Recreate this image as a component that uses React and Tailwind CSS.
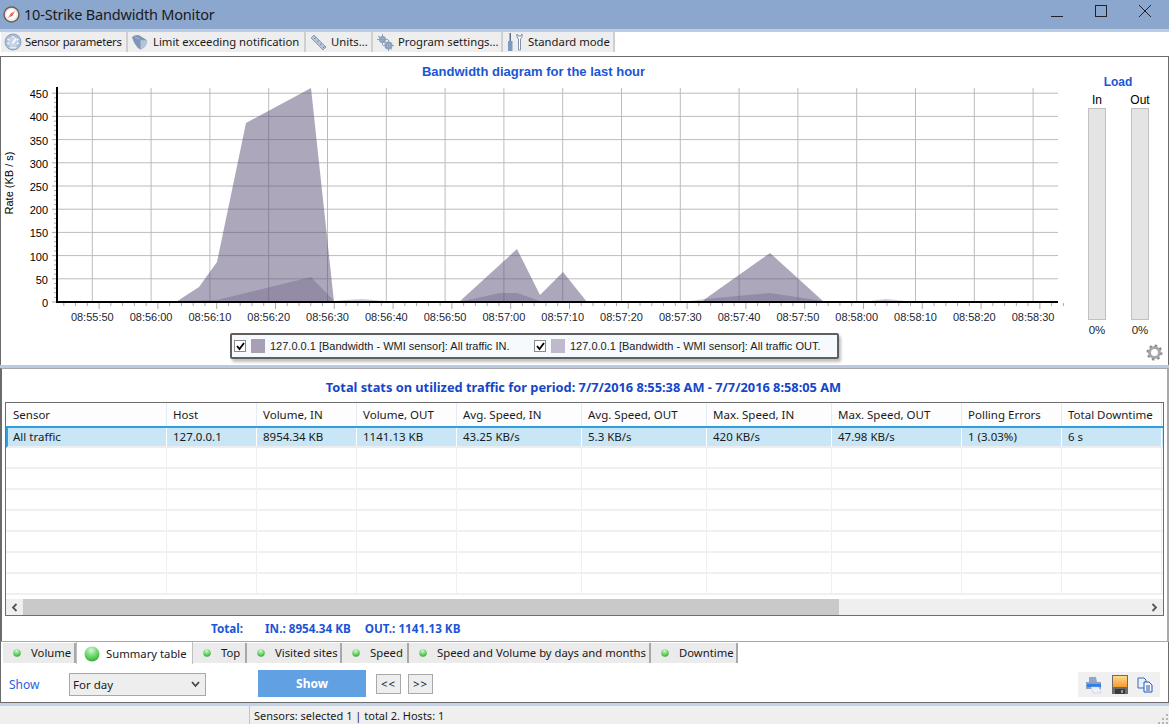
const sans = "font-['Noto_Sans','Open_Sans',sans-serif]";
const arial = "'Liberation Sans', Arial, sans-serif";

const TOOLS = [
  { label: "Sensor parameters", w: "w-[127px]", icon: <GaugeIcon />, text: "tracking-[-0.25px] -ml-[1px]" },
  { label: "Limit exceeding notification", w: "w-[178px]", icon: <BellIcon /> },
  { label: "Units...", w: "w-[67px]", icon: <RulerIcon /> },
  { label: "Program settings...", w: "w-[130px]", icon: <GearsIcon /> },
  { label: "Standard mode", w: "w-[112px]", icon: <ToolsIcon /> },
];

const COLS = [
  { name: "Sensor", value: "All traffic", w: "w-[161px]" },
  { name: "Host", value: "127.0.0.1", w: "w-[90px]" },
  { name: "Volume, IN", value: "8954.34 KB", w: "w-[100px]" },
  { name: "Volume, OUT", value: "1141.13 KB", w: "w-[100px]" },
  { name: "Avg. Speed, IN", value: "43.25 KB/s", w: "w-[125px]" },
  { name: "Avg. Speed, OUT", value: "5.3 KB/s", w: "w-[125px]" },
  { name: "Max. Speed, IN", value: "420 KB/s", w: "w-[125px]" },
  { name: "Max. Speed, OUT", value: "47.98 KB/s", w: "w-[130px]" },
  { name: "Polling Errors", value: "1 (3.03%)", w: "w-[100px]" },
  { name: "Total Downtime", value: "6 s", w: "w-[100px]" },
];

const TABS = [
  { label: "Volume", w: "w-[73px]" },
  { label: "Summary table", w: "w-[117px]", active: true },
  { label: "Top", w: "w-[54px]" },
  { label: "Visited sites", w: "w-[95px]" },
  { label: "Speed", w: "w-[67px]" },
  { label: "Speed and Volume by days and months", w: "w-[242px]" },
  { label: "Downtime", w: "w-[87px]" },
];

const TIMES = ["08:55:50", "08:56:00", "08:56:10", "08:56:20", "08:56:30", "08:56:40", "08:56:50", "08:57:00", "08:57:10", "08:57:20", "08:57:30", "08:57:40", "08:57:50", "08:58:00", "08:58:10", "08:58:20", "08:58:30"];
const RATES = [0, 50, 100, 150, 200, 250, 300, 350, 400, 450];

const IN_AREA = "58,302 176,302 199,287 217,262 246,123 311,88 334,302 459,302 517,249 540,295 563,272 587,302 702,302 705,299 770,253 824,302 1058,302";
const OUT_AREA = "58,302 137,301 176,301 217,300 311,277 334,301 345,300 362,299 385,301 420,301 459,302 500,293 517,293 540,301 587,302 690,301 705,299 770,293 823,301 835,302 870,301 886,299 905,301 1058,302";

function GaugeIcon() {
  return (
    <svg width="18" height="18" viewBox="0 0 18 18">
      <circle cx="9" cy="9" r="8" fill="#a9bdd6" stroke="#8ea3c0" />
      <circle cx="9" cy="9" r="5.500" fill="#c5d3e4" />
      <path d="M9 3 V5 M3.500 6 L5.200 7 M14.500 6 L12.800 7 M3 10.500 H5 M15 10.500 H13" stroke="#fff" strokeWidth="1.200" />
      <path d="M8.500 10.500 L12 5.500" stroke="#fff" strokeWidth="1.800" />
      <path d="M5 14 H13 L11.500 15.500 H6.500 Z" fill="#e4ebf3" />
    </svg>
  );
}

function BellIcon() {
  return (
    <svg width="19" height="17" viewBox="0 0 19 17">
      <path d="M1 3 C3 1 6 0 9 1 L17 6 C17 11 14 14 10 16 C6 14 3 9 1 3 Z" fill="#7f96b6" />
      <path d="M10 6 L17 6 C17 11 14 14 10 16 Z" fill="#b4c4da" />
      <path d="M4 2.500 L9 5" stroke="#a6b8d0" />
    </svg>
  );
}

function RulerIcon() {
  return (
    <svg width="17" height="17" viewBox="0 0 17 17">
      <path d="M1 4 L4 1 L16 13 L13 16 Z" fill="#b4c3d8" stroke="#8fa2bb" />
      <path d="M4 5 L5.500 3.500 M7 8 L8.500 6.500 M10 11 L11.500 9.500 M13 14 L14.500 12.500" stroke="#6f85a3" />
    </svg>
  );
}

function GearsIcon() {
  return (
    <svg width="17" height="17" viewBox="0 0 17 17" fill="#8da1bd">
      <circle cx="5.500" cy="5.500" r="3.500" />
      <circle cx="11.500" cy="11.500" r="4" />
      <circle cx="5.500" cy="5.500" r="1.300" fill="#eee" />
      <circle cx="11.500" cy="11.500" r="1.500" fill="#eee" />
      <path d="M5 0 h1 v11 h-1 Z M0 5 h11 v1 h-11 Z M1.500 1.500 l8 8 -.7 .7 -8 -8 Z M11 6 h1 v11 h-1 Z M6 11 h11 v1 h-11 Z M8 8 l7 7 -.7 .7 -7 -7 Z" />
    </svg>
  );
}

function ToolsIcon() {
  return (
    <svg width="18" height="19" viewBox="0 0 18 19">
      <path d="M3.500 0 h1.500 v8 h-1.500 Z" fill="#5f6f86" />
      <path d="M2 8 h4.500 v10 h-4.500 Z" fill="#7f9ac0" />
      <path d="M11 1 v3 l1.500 2 v11 h2 v-11 l1.500 -2 v-3 l-1 2 h-3 Z" fill="#fff" stroke="#8094ae" />
    </svg>
  );
}

function Logo() {
  return (
    <svg width="17" height="17" viewBox="0 0 17 17">
      <circle cx="8.500" cy="8.500" r="7.500" fill="#ece9e6" stroke="#6b625c" strokeWidth="1.500" />
      <circle cx="8.500" cy="8.500" r="5" fill="#fff" />
      <path d="M5 12 L12 5 L9.500 9.500 Z" fill="#e5383b" />
      <path d="M5 12 L7.500 7.500 L12 5 Z" fill="#f06a5e" />
    </svg>
  );
}

function Led({ big }) {
  const size = big ? 16 : 8;
  return (
    <svg width={size} height={size} viewBox="0 0 16 16" className="shrink-0">
      <defs>
        <radialGradient id={big ? "ledBig" : "ledSmall"} cx="45%" cy="25%" r="80%">
          <stop offset="0%" stopColor="#d8f5d8" />
          <stop offset="50%" stopColor="#6fd96f" />
          <stop offset="100%" stopColor="#2ea82e" />
        </radialGradient>
      </defs>
      <circle cx="8" cy="8" r="7.500" fill={`url(#${big ? "ledBig" : "ledSmall"})`} />
    </svg>
  );
}

function Chart() {
  return (
    <svg width="1079" height="242" viewBox="1 82 1079 242" className="block">
      {RATES.map((r, i) => (
        <line key={r} x1="57" x2="1058" y1={302 - i * 23.200} y2={302 - i * 23.200} stroke="#bcbcbc" />
      ))}
      {TIMES.map((t, i) => (
        <line key={t} x1={92.300 + i * 58.800} x2={92.300 + i * 58.800} y1="88" y2="302" stroke="#bcbcbc" />
      ))}
      <polygon points={IN_AREA} fill="#5c5077" fillOpacity="0.5" />
      <polygon points={OUT_AREA} fill="#5c5077" fillOpacity="0.3" />
      {Array.from({ length: 46 }).map((_, i) => (
        <line key={i} x1={i % 5 === 0 ? 52 : 54} x2="57" y1={302 - i * 4.640} y2={302 - i * 4.640} stroke="#aaa" />
      ))}
      {Array.from({ length: 86 }).map((_, i) => (
        <line key={i} x1={63.800 + i * 11.760} x2={63.800 + i * 11.760} y1="303" y2={(i + 2) % 5 === 0 ? 309 : 306} stroke="#aaa" />
      ))}
      <line x1="57" x2="57" y1="87" y2="303" stroke="#000" strokeWidth="2" />
      <line x1="56" x2="1058" y1="302" y2="302" stroke="#000" strokeWidth="2" />
      {RATES.map((r, i) => (
        <text key={r} x="48" y={307 - i * 23.200} textAnchor="end" fontSize="11" fill="#000" fontFamily={arial}>{r}</text>
      ))}
      {TIMES.map((t, i) => (
        <text key={t} x={92.300 + i * 58.800} y="321" textAnchor="middle" fontSize="11" fill="#1c2733" fontFamily={arial}>{t}</text>
      ))}
      <text transform="translate(13 183) rotate(-90)" textAnchor="middle" fontSize="11" fill="#000" fontFamily={arial}>Rate (KB / s)</text>
    </svg>
  );
}

function LegendItem({ swatch, label, w }) {
  return (
    <div className={`flex items-center ${w}`}>
      <span className="w-3 h-3 bg-white border border-[#8a8a8a] flex items-center justify-center">
        <svg width="9" height="9" viewBox="0 0 9 9"><path d="M1 4 L3.500 7 L8 1" fill="none" stroke="#000" strokeWidth="1.800" /></svg>
      </span>
      <span className={`w-[14px] h-[14px] ml-[5px] mr-[5px] ${swatch}`} />
      <span className="whitespace-nowrap">{label}</span>
    </div>
  );
}

function LoadBar({ label }) {
  return (
    <div className="w-[18px] flex flex-col items-center">
      <div className="text-[12px] leading-[13px] h-[13px] text-black">{label}</div>
      <div className="mt-[1px] w-[18px] h-[212px] bg-[#e4e4e4] border border-[#c0c0c0]" />
      <div className="mt-[3px] text-[11.500px] leading-[14px] text-[#222]">0%</div>
    </div>
  );
}

export default function App() {
  return (
    <div className={`w-[1169px] h-[724px] overflow-hidden bg-white flex flex-col ${sans}`}>
      {/* title bar */}
      <div className="h-[29px] shrink-0 bg-[#8ca7cd] flex items-center pl-[3px]">
        <Logo />
        <span className="ml-[4px] text-[14.500px] tracking-[-0.2px] text-[#1a1a1a] leading-none">10-Strike Bandwidth Monitor</span>
        <div className="ml-auto flex items-center -mt-[8px]">
          <svg width="14" height="14" viewBox="0 0 14 14" className="mr-[30px]"><path d="M1 12.500 H13" stroke="#222" /></svg>
          <svg width="14" height="14" viewBox="0 0 14 14" className="mr-[30px]"><rect x="1.500" y="1.500" width="11" height="11" fill="none" stroke="#222" /></svg>
          <svg width="14" height="14" viewBox="0 0 14 14" className="mr-[17px]"><path d="M1 1 L13 13 M13 1 L1 13" stroke="#222" /></svg>
        </div>
      </div>
      <div className="h-[3px] shrink-0 bg-[#bccde4]" />

      {/* toolbar */}
      <div className="h-[24px] shrink-0 pb-[4px] flex bg-white">
        {TOOLS.map((t) => (
          <div key={t.label} className={`${t.w} first:ml-[1px] h-full flex items-center gap-[4px] pl-[3px] bg-[#eeeeee] border-r-2 border-[#cfcfcf]`}>
            <span className="w-[18px] flex justify-center shrink-0">{t.icon}</span>
            <span className={`text-[11.300px] pt-[1px] text-[#1a1a1a] whitespace-nowrap ${t.text || ""}`}>{t.label}</span>
          </div>
        ))}
      </div>

      {/* chart panel */}
      <div className="h-[309px] shrink-0 border-l border-t border-r border-[#6b6b6b] flex relative">
        <div className="w-[1079px] flex flex-col">
          <div className="h-[25px] pt-[7px] text-center text-[13px] leading-[16px] font-bold text-[#1b55d6] pr-[14px] [font-family:'Liberation_Sans']">Bandwidth diagram for the last hour</div>
          <Chart />
          <div className="ml-[229px] mt-[9px] w-[609px] h-[26px] border-2 border-[#5f5f5f] rounded-[2px] bg-[#f6fafd] shadow-[2px_3px_3px_rgba(0,0,0,0.25)] flex items-center pl-[2px] text-[11px] text-[#222] [font-family:'Liberation_Sans']">
            <LegendItem swatch="bg-[#a89fb7]" label="127.0.0.1 [Bandwidth - WMI sensor]: All traffic IN." w="w-[300px]" />
            <LegendItem swatch="bg-[#bfb9cc]" label="127.0.0.1 [Bandwidth - WMI sensor]: All traffic OUT." w="w-[300px]" />
          </div>
        </div>
        <div className="flex-1 flex flex-col items-center pt-[18px] pr-[7px] [font-family:'Liberation_Sans']">
          <div className="text-[12px] leading-[14px] font-bold text-[#1b55d6] mr-[5px]">Load</div>
          <div className="mt-[5px] ml-[-4px] flex gap-[25px]">
            <LoadBar label="In" />
            <LoadBar label="Out" />
          </div>
        </div>
        <svg width="17" height="17" viewBox="0 0 17 17" className="absolute right-[5px] bottom-[4px]">
          <circle cx="8.500" cy="8.500" r="5" fill="none" stroke="#a8a8a8" strokeWidth="3" />
          <circle cx="8.500" cy="8.500" r="7" fill="none" stroke="#8a8a8a" strokeWidth="2" strokeDasharray="2.500 3" />
        </svg>
      </div>
      <div className="h-[3px] shrink-0 bg-[#b9cbe3]" />

      {/* summary panel */}
      <div className="h-[274px] shrink-0 border-l-2 border-r-2 border-t border-b border-[#a8a8a8] border-l-[#6b6b6b] flex flex-col">
        <div className="h-[33px] pt-[9px] text-center text-[12.800px] leading-[18px] font-bold text-[#1447c8] pr-[2px] whitespace-nowrap">Total stats on utilized traffic for period: 7/7/2016 8:55:38 AM - 7/7/2016 8:58:05 AM</div>
        <div className="ml-[3px] mr-[3px] h-[214px] border border-[#6e6e6e] flex flex-col text-[11.500px] text-[#1a1a1a]">
          <div className="h-[25px] flex shrink-0 border-b-2 border-[#2f9fe0] bg-[#fdfdfd]">
            {COLS.map((c, i) => (
              <div key={c.name} className={`${c.w} ${i === 0 ? "pl-[7px]" : "pl-[6px]"} shrink-0 flex items-center border-r border-[#e4edf7] whitespace-nowrap`}>{c.name}</div>
            ))}
          </div>
          <div className="h-[20px] flex shrink-0 bg-[#c8e6f5] border-l-2 border-[#2f9fe0] border-b-2 border-b-[#ededed]">
            {COLS.map((c, i) => (
              <div key={c.name} className={`${c.w} ${i === 0 ? "-ml-[2px] pl-[7px]" : "pl-[6px]"} shrink-0 flex items-center border-r border-white whitespace-nowrap`}>{c.value}</div>
            ))}
          </div>
          <div className="flex-1 overflow-hidden">
            {[0, 1, 2, 3, 4, 5, 6].map((r) => (
              <div key={r} className="h-[21px] flex border-b-2 border-[#f0f0f0]">
                {COLS.map((c) => (
                  <div key={c.name} className={`${c.w} shrink-0 border-r border-[#efefef]`} />
                ))}
              </div>
            ))}
          </div>
          <div className="h-[16px] shrink-0 bg-[#efefef] flex items-center">
            <div className="w-[17px] h-full flex items-center justify-center">
              <svg width="7" height="9" viewBox="0 0 7 9"><path d="M5.500 1 L2 4.500 L5.500 8" fill="none" stroke="#555" strokeWidth="1.800" /></svg>
            </div>
            <div className="w-[816px] h-full bg-[#c9c9c9]" />
            <div className="ml-auto w-[17px] h-full flex items-center justify-center">
              <svg width="7" height="9" viewBox="0 0 7 9"><path d="M1.500 1 L5 4.500 L1.500 8" fill="none" stroke="#555" strokeWidth="1.800" /></svg>
            </div>
          </div>
        </div>
        <div className="flex-1 flex items-center text-[11.700px] font-bold text-[#1b55d6]">
          <span className="ml-[209px]">Total:</span>
          <span className="ml-[22px]">IN.: 8954.34 KB</span>
          <span className="ml-[14px]">OUT.: 1141.13 KB</span>
        </div>
      </div>

      {/* bottom panel with tabs */}
      <div className="h-[61px] shrink-0 border-l border-r border-b border-[#6b6b6b] flex flex-col">
        <div className="h-[22px] flex pl-[2px] shrink-0">
          {TABS.map((t) => (
            <div
              key={t.label}
              className={t.active
                ? `${t.w} h-[22px] bg-white flex items-center pl-[7px] gap-[6px] pt-[2px] text-[11.300px] text-[#1a1a1a] border-x border-[#c0c0c0]`
                : `${t.w} h-[20px] mt-[1px] bg-[#ebebeb] flex items-center pl-[10px] gap-[10px] text-[11.300px] text-[#1a1a1a] border-r-2 border-[#a8a8a8]`}
            >
              <Led big={t.active} />
              <span className="whitespace-nowrap">{t.label}</span>
            </div>
          ))}
        </div>
        <div className="flex-1 flex items-center text-[11.500px] pt-[3px]">
          <span className="ml-[8px] w-[60px] text-[#2a62e0] text-[12px]">Show</span>
          <div className="w-[137px] h-[23px] border border-[#a8a8a8] bg-[#eeeeee] flex items-center pl-[3px] text-[#1a1a1a]">
            For day
            <svg width="9" height="7" viewBox="0 0 9 7" className="ml-auto mr-[5px]"><path d="M1 1 L4.500 5 L8 1" fill="none" stroke="#444" strokeWidth="1.800" /></svg>
          </div>
          <div className="ml-[52px] w-[108px] h-[27px] -mt-[2px] bg-[#62a0e4] text-white font-bold text-[12px] flex items-center justify-center">Show</div>
          <div className="ml-[10px] w-[25px] h-[20px] -mt-[2px] bg-[#eeeeee] border border-[#a8a8a8] flex items-center justify-center tracking-[1px] text-[#111]">&lt;&lt;</div>
          <div className="ml-[7px] w-[25px] h-[20px] -mt-[2px] bg-[#eeeeee] border border-[#a8a8a8] flex items-center justify-center tracking-[1px] text-[#111]">&gt;&gt;</div>
          <div className="ml-auto mr-[8px] w-[82px] h-[25px] bg-[#f0f0f0] flex items-center justify-around px-[2px]">
            <svg width="18" height="18" viewBox="0 0 18 18">
              <path d="M4 1 h7 l1 5 h-8 Z" fill="#93a6c6" />
              <path d="M1 6 h15 v7 h-15 Z" fill="#8c9fc4" />
              <path d="M2 8 h14 v3 h-14 Z" fill="#2f7fe8" />
              <path d="M6 11 h8 l2 6 h-8 Z" fill="#eef1f5" stroke="#b8c0cc" strokeWidth="0.500" />
            </svg>
            <svg width="16" height="19" viewBox="0 0 16 19">
              <defs>
                <linearGradient id="floppyFill" x1="0" y1="0" x2="0" y2="1">
                  <stop offset="0%" stopColor="#ffd98a" />
                  <stop offset="100%" stopColor="#f59a2e" />
                </linearGradient>
              </defs>
              <rect width="16" height="19" fill="#6b6b6b" />
              <rect x="1" y="1" width="14" height="11" fill="url(#floppyFill)" />
              <rect x="3" y="14" width="10" height="5" fill="#3a3a3a" />
              <rect x="9" y="15" width="2" height="3" fill="#999" />
            </svg>
            <svg width="16" height="16" viewBox="0 0 16 16">
              <path d="M1 1 h6 l2 2 v8 h-8 Z" fill="#e8f0fb" stroke="#3c68b0" />
              <path d="M7 5 h5 l3 3 v7 h-8 Z" fill="#f5f8fd" stroke="#2358b5" />
              <path d="M9 9 h4 M9 11 h4 M9 13 h4" stroke="#2358b5" />
            </svg>
          </div>
        </div>
      </div>
      <div className="h-[3px] shrink-0 bg-[#c3d3e8]" />

      {/* status bar */}
      <div className="flex-1 min-h-0 bg-[#efefef] flex items-end text-[11px] text-[#1a1a1a]">
        <div className="ml-[249px] pl-[4px] h-full border-l border-[#c4c4c4] whitespace-nowrap leading-[19px]">Sensors: selected 1 | total 2. Hosts: 1</div>
        <svg width="11" height="11" viewBox="0 0 11 11" className="ml-auto" fill="#b5b5b5">
          <rect x="8" y="1" width="2" height="2" />
          <rect x="4" y="5" width="2" height="2" />
          <rect x="8" y="5" width="2" height="2" />
          <rect x="0" y="9" width="2" height="2" />
          <rect x="4" y="9" width="2" height="2" />
          <rect x="8" y="9" width="2" height="2" />
        </svg>
      </div>
    </div>
  );
}
